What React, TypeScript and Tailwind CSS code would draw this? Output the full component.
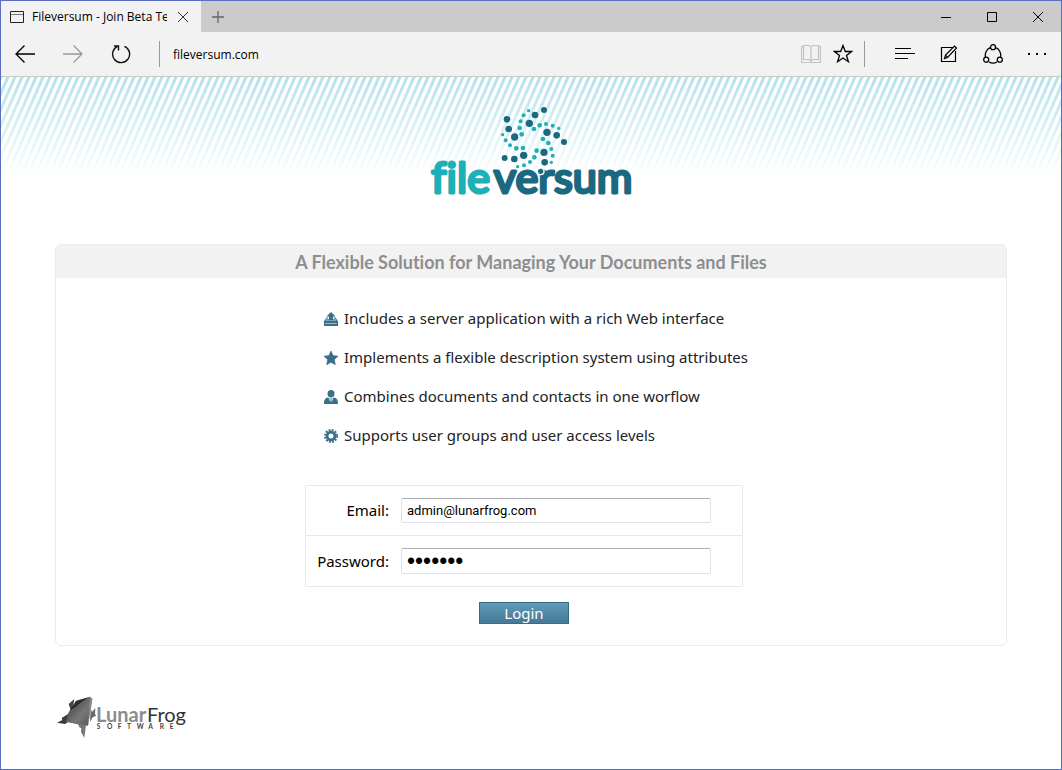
import React, { useState } from 'react';

const TEAL = '#1cb0b9';
const NAVY = '#1b6980';

const darkDots = [
  [261, 73, 10], [266, 102, 10], [284, 126, 11], [345, 60, 10], [372, 45, 9],
  [328, 85, 11], [381, 112, 11], [410, 121, 10], [432, 141, 9], [372, 172, 11],
  [374, 202, 10], [311, 181, 11], [283, 192, 10], [254, 189, 9],
];

const tealDots = [
  [326, 47, 5], [311, 61, 6], [302, 79, 6], [299, 99, 7], [305, 118, 7],
  [248, 119, 5], [257, 136, 6], [270, 151, 6], [289, 160, 7], [309, 159, 7],
  [342, 102, 7], [359, 91, 7], [378, 87, 6], [398, 92, 6], [416, 100, 5],
  [369, 132, 7], [385, 144, 7], [394, 162, 6], [398, 182, 6], [394, 202, 5],
  [350, 167, 7], [343, 187, 7], [330, 201, 6], [312, 211, 6], [293, 215, 5],
];

const features = [
  { icon: <UploadIcon />, text: 'Includes a server application with a rich Web interface' },
  { icon: <StarIcon />, text: 'Implements a flexible description system using attributes' },
  { icon: <PersonIcon />, text: 'Combines documents and contacts in one worflow' },
  { icon: <GearIcon />, text: 'Supports user groups and user access levels' },
];

function UploadIcon() {
  return (
    <svg width="14" height="14" viewBox="0 0 14 14" fill="#3b6f89">
      <path d="M7 0l4.600 4.600H9v3.400H5V4.600H2.400z" />
      <path d="M2.600 5.600H4.200v1H3.100L1.700 8.700H12.300L10.900 6.600H9.800v-1h1.600L14 9.300V14H0V9.300z" />
      <path d="M2.200 8.700h9.600l-1-1.600H3.200z" opacity=".75" />
      <path d="M1.300 11.500h11.400" stroke="#b9ced8" strokeWidth=".8" />
    </svg>
  );
}

function StarIcon() {
  return (
    <svg width="14" height="14" viewBox="0 0 14 14" fill="#3b6f89">
      <path d="M7 0l2.100 4.600 4.900.6-3.600 3.400.9 5.200L7 11.300l-4.300 2.500.9-5.200L0 5.200l4.900-.6z" stroke="#3b6f89" strokeWidth=".6" />
    </svg>
  );
}

function PersonIcon() {
  return (
    <svg width="14" height="14" viewBox="0 0 14 14" fill="#3b6f89">
      <ellipse cx="7" cy="3.700" rx="3.500" ry="3.700" />
      <path d="M0 14c0-4.500 1.500-5.800 4-6.400L7 9l3-1.400c2.500.6 4 1.900 4 6.400z" />
      <path d="M4.700 8l1.500 4.800L7 10l.8 2.800L9.300 8 7 9z" fill="#e4edf1" />
      <path d="M6.300 8.600h1.400L7.300 10l.7 3.200-1 .8-1-.8.700-3.200z" />
    </svg>
  );
}

function GearIcon() {
  return (
    <svg width="14" height="14" viewBox="0 0 14 14" fill="none" stroke="#3b6f89">
      <circle cx="7" cy="7" r="3.900" strokeWidth="2.800" />
      <circle cx="7" cy="7" r="6" strokeWidth="2" strokeDasharray="1.850 1.292" />
    </svg>
  );
}

function FileversumLogo() {
  return (
    <svg
      role="img"
      aria-label="fileversum"
      width="202"
      height="92"
      viewBox="30 30 606 276"
      className='overflow-visible font-["Lato",sans-serif] [font-variant-ligatures:none]'
    >
      {tealDots.map(([x, y, r]) => (
        <circle key={`${x}-${y}`} cx={x} cy={y} r={r} fill={TEAL} />
      ))}
      {darkDots.map(([x, y, r]) => (
        <circle key={`${x}-${y}`} cx={x} cy={y} r={r} fill={NAVY} />
      ))}
      <g fontSize="130" strokeWidth="9" strokeLinejoin="round">
        <text x="34" y="295" fill={TEAL} stroke={TEAL}>file</text>
        <text x="221" y="295" fill={NAVY} stroke={NAVY}>versum</text>
      </g>
      <circle cx="362" cy="229" r="12" fill="#fff" />
      <circle cx="362" cy="229" r="8" fill={NAVY} />
    </svg>
  );
}

function LunarFrogLogo() {
  return (
    <svg
      role="img"
      aria-label="LunarFrog Software"
      width="130"
      height="44"
      viewBox="51 195 390 132"
      className='overflow-visible font-["Lato",sans-serif]'
    >
      <defs>
        <linearGradient id="frog" x1="0" y1="0" x2="1" y2="1">
          <stop offset="0" stopColor="#333" />
          <stop offset=".6" stopColor="#777" />
          <stop offset="1" stopColor="#555" />
        </linearGradient>
      </defs>
      <path d="M92 240l-6-18 17-15-3 17 13 4z" fill="#444" />
      <path d="M88 250l-23 14 2 6-16 8 24 4 10-6 20 4z" fill="#3c3c3c" />
      <path d="M152 236l4 10 10-12-1 18 3 6-10 4-8 14z" fill="#6a6a6a" />
      <path d="M112 276l6 16 6 3-1 11 10 17 5-38z" fill="#777" />
      <path d="M150 200l7 7-13 80-32-4-34-8 8-28z" fill="url(#frog)" />
      <path d="M150 200l-64 47 22-35z" fill="#2f2f2f" />
      <path d="M150 200l7 7-13 80z" fill="#8a8a8a" />
      <text x="168" y="275" fontSize="60" fontWeight="700" fill="#8c8c8c">Lunar</text>
      <text x="321" y="275" fontSize="60" fill="#333">Frog</text>
      <text x="170 201 233 261 290 325 359 389" y="296" fontSize="20" fontWeight="700" fill="#444">SOFTWARE</text>
    </svg>
  );
}

function Stripes() {
  return (
    <svg className="absolute inset-x-0 top-0 h-[98px] w-full" aria-hidden="true">
      <defs>
        <pattern id="stripes" width="7" height="16" patternUnits="userSpaceOnUse">
          <path d="M-7 32L14 -16M-14 32L7 -16M0 32L21 -16" stroke="#b3e3ea" strokeWidth="3" />
        </pattern>
        <linearGradient id="fade" x1="0" y1="0" x2="0" y2="1">
          <stop offset="0" stopColor="#fff" stopOpacity="0" />
          <stop offset="1" stopColor="#fff" />
        </linearGradient>
      </defs>
      <rect width="100%" height="100%" fill="url(#stripes)" />
      <rect width="100%" height="100%" fill="url(#fade)" />
    </svg>
  );
}

function IconButton({ label, className, children }: { label: string; className: string; children: React.ReactNode }) {
  return (
    <button type="button" aria-label={label} className={`flex h-full shrink-0 items-center justify-center ${className}`}>
      {children}
    </button>
  );
}

function TabBar() {
  return (
    <div className="flex h-[31px] bg-[#cbcbcb]">
      <div className="flex w-[200px] items-center bg-[#f2f2f2] pl-[9px]">
        <svg width="14" height="12" viewBox="0 0 14 12" fill="none" stroke="#222" className="mr-2 shrink-0">
          <path d="M.5.5h13v11H.5z" />
          <path d="M1 3.500h12" stroke="#777" />
        </svg>
        <span className="w-[135px] overflow-hidden whitespace-nowrap text-xs">Fileversum - Join Beta Test</span>
        <IconButton label="Close tab" className="w-8">
          <svg width="10" height="10" viewBox="0 0 10 10" stroke="#333">
            <path d="M0 0l10 10M10 0L0 10" />
          </svg>
        </IconButton>
      </div>
      <IconButton label="New tab" className="w-[34px]">
        <svg width="12" height="12" viewBox="0 0 12 12" stroke="#666">
          <path d="M0 6h12M6 0v12" strokeWidth="1.300" />
        </svg>
      </IconButton>
      <div className="ml-auto flex">
        <IconButton label="Minimize" className="w-[46px]">
          <svg width="10" height="10" viewBox="0 0 10 10" stroke="#000">
            <path d="M0 5.500h10" />
          </svg>
        </IconButton>
        <IconButton label="Maximize" className="w-[46px]">
          <svg width="10" height="10" viewBox="0 0 10 10" stroke="#000" fill="none">
            <path d="M.5.5h9v9h-9z" />
          </svg>
        </IconButton>
        <IconButton label="Close" className="w-[46px]">
          <svg width="10" height="10" viewBox="0 0 10 10" stroke="#000">
            <path d="M0 0l10 10M10 0L0 10" />
          </svg>
        </IconButton>
      </div>
    </div>
  );
}

function Toolbar() {
  return (
    <div className="flex h-[45px] items-center border-b border-[#c9c9c9] bg-[#f2f2f2] pr-0.5">
      <IconButton label="Back" className="w-12">
        <svg width="20" height="18" viewBox="0 0 20 18" fill="none" stroke="#000" strokeWidth="1.300">
          <path d="M20 9H1M9.500.5L1 9l8.500 8.500" />
        </svg>
      </IconButton>
      <IconButton label="Forward" className="w-12">
        <svg width="20" height="18" viewBox="0 0 20 18" fill="none" stroke="#999" strokeWidth="1.300">
          <path d="M0 9h19M10.500.5L19 9l-8.500 8.500" />
        </svg>
      </IconButton>
      <IconButton label="Refresh" className="w-12">
        <svg width="20" height="20" viewBox="0 0 20 20" fill="none" stroke="#111" strokeWidth="1.400">
          <path d="M13.500 2.300A8.500 8.500 0 1 1 6.500 2.400" />
          <path d="M3 2h4.500v4.500" />
        </svg>
      </IconButton>
      <div className="ml-[14px] h-[26px] w-px bg-[#999]" />
      <input
        type="text"
        aria-label="Address"
        defaultValue="fileversum.com"
        className="h-[26px] min-w-0 flex-1 bg-transparent pl-[13px] text-xs text-black outline-none"
      />
      <IconButton label="Reading view" className="w-8">
        <svg width="20" height="20" viewBox="0 0 20 20" fill="none" stroke="#c2c2c2" strokeWidth="1.200">
          <path d="M2.500 1.500H8L10 3l2-1.500h5.500v14H12L10 17l-2-1.500H2.500zM10 3v14" />
          <path d="M2.500 2.500h-2v16h19v-16h-2" />
        </svg>
      </IconButton>
      <IconButton label="Favorites" className="w-8">
        <svg width="20" height="20" viewBox="0 0 20 20" fill="none" stroke="#000" strokeWidth="1.300">
          <path d="M10 1.500l2.300 6h6.200l-5 3.900 1.900 6.300L10 14l-5.400 3.700 1.900-6.300-5-3.900h6.200z" />
        </svg>
      </IconButton>
      <div className="mr-[18px] ml-[5px] h-[26px] w-px bg-[#999]" />
      <IconButton label="Hub" className="w-11">
        <svg width="20" height="12" viewBox="0 0 20 12" stroke="#000" className="mb-0.5">
          <path d="M0 1.500h16M0 6.500h20M0 11.500h13" />
        </svg>
      </IconButton>
      <IconButton label="Make a web note" className="w-11">
        <svg width="18" height="18" viewBox="0 0 18 18" fill="none" stroke="#000" strokeWidth="1.200">
          <path d="M13 2.500H1.500v14h14V6" />
          <path d="M4.500 13.500l1-3.500L14.500 1l2 2-9 9.500zM5.500 10l2 2.500" />
        </svg>
      </IconButton>
      <IconButton label="Share" className="w-11">
        <svg width="20" height="20" viewBox="0 0 20 20" fill="none" stroke="#000" strokeWidth="1.300">
          <path d="M7.300 3.700A8 8 0 0 0 2.500 13M12.700 3.700A8 8 0 0 1 17.500 13M6 18a8 8 0 0 0 8 0" />
          <circle cx="10" cy="3.200" r="2.500" />
          <circle cx="3.200" cy="15.700" r="2.500" />
          <circle cx="16.800" cy="15.700" r="2.500" />
        </svg>
      </IconButton>
      <IconButton label="More" className="w-11">
        <svg width="18" height="2" viewBox="0 0 18 2">
          <path d="M0 0h2v2H0zM8 0h2v2H8zM16 0h2v2h-2z" />
        </svg>
      </IconButton>
    </div>
  );
}

const inputClass =
  'min-w-0 flex-1 rounded-[2px] border border-[#dfe0ea] border-t-[#abadb3] bg-white px-[5px] text-black outline-none';

function LoginForm() {
  const [email, setEmail] = useState('admin@lunarfrog.com');
  const [password, setPassword] = useState('1234567');

  return (
    <form
      className="mx-auto mt-[30px] w-full max-w-[452px] pr-[14px] text-center"
      onSubmit={(e) => e.preventDefault()}
    >
      <div className="divide-y divide-[#e8e8e8] border border-[#e8e8e8]">
        <div className="flex h-[50px] items-center pr-[31px]">
          <label htmlFor="email" className="w-[83px] text-right text-[15px] text-black">Email:</label>
          <input
            id="email"
            type="email"
            value={email}
            onChange={(e) => setEmail(e.target.value)}
            className={`ml-3 h-[25px] font-[Roboto,sans-serif] text-[13px] ${inputClass}`}
          />
        </div>
        <div className="flex h-[50px] items-center pr-[31px]">
          <label htmlFor="password" className="w-[83px] text-right text-[15px] text-black">Password:</label>
          <input
            id="password"
            type="password"
            value={password}
            onChange={(e) => setPassword(e.target.value)}
            className={`ml-3 h-[26px] font-["Liberation_Sans",sans-serif] text-[23px] ${inputClass}`}
          />
        </div>
      </div>
      <button
        type="submit"
        className="mx-auto mt-[15px] block h-[22px] w-[90px] border border-[#3a6c82] bg-linear-to-b from-[#609bb9] to-[#457995] text-[15px] leading-5 text-white"
      >
        Login
      </button>
    </form>
  );
}

export default function App() {
  return (
    <div className='flex min-h-screen flex-col border border-[#5b6fc2] bg-white font-["Noto_Sans","Open_Sans",sans-serif] text-[#222]'>
      <div className='font-["Open_Sans",sans-serif] text-black'>
        <TabBar />
        <Toolbar />
      </div>

      <main className="relative flex-1 px-[54px] pb-6">
        <Stripes />
        <div className="relative flex justify-center pt-7">
          <FileversumLogo />
        </div>

        <section className="mt-[47px] overflow-hidden rounded-md border border-[#ececec] pb-[21px]">
          <h1 className='bg-[#f2f2f2] pt-0.5 text-center font-["Lato",sans-serif] text-lg leading-[31px] font-bold text-[#8e8e8e] [font-variant-ligatures:none]'>
            A Flexible Solution for Managing Your Documents and Files
          </h1>
          <div className="pt-[21px] pl-[18px]">
            <ul className="mx-auto max-w-[434px]">
              {features.map((feature) => (
                <li key={feature.text} className="flex h-[39px] items-center gap-[6px] pl-px text-[15px]">
                  {feature.icon}
                  {feature.text}
                </li>
              ))}
            </ul>
          </div>
          <LoginForm />
        </section>

        <footer className="mt-[49px] pl-0.5">
          <a href="#lunarfrog" className="inline-block">
            <LunarFrogLogo />
          </a>
        </footer>
      </main>
    </div>
  );
}
